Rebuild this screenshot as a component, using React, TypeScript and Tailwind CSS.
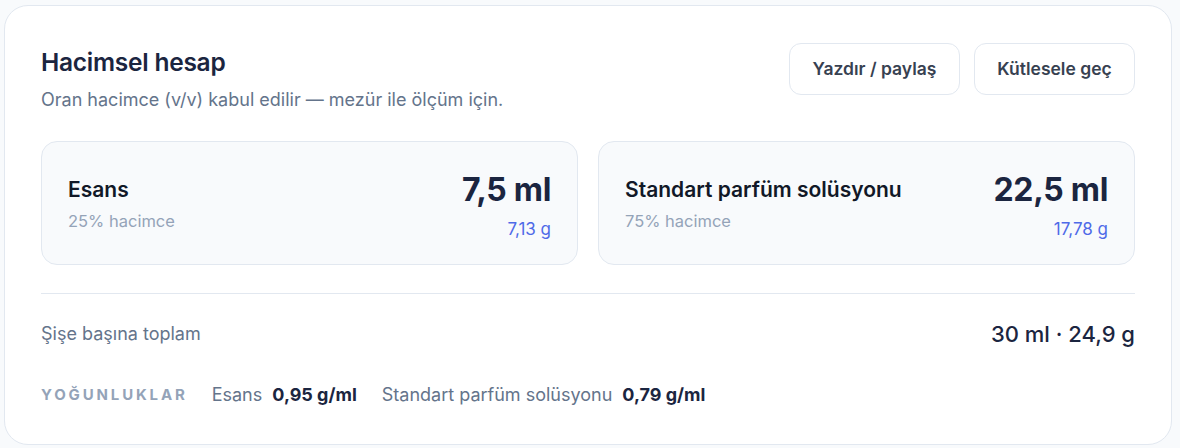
import React from "react";

const font = { fontFamily: "Inter, 'Noto Sans', sans-serif" };

function Part({ name, pct, ml, g }: { name: string; pct: string; ml: string; g: string }) {
  return (
    <div className="flex-1 rounded-[16px] border border-[#e2e8f0] bg-[#f8fafc] px-[26px] pt-[28px] pb-[24px]">
      <div className="flex items-center justify-between h-[40px]">
        <div className="text-[21px] leading-[28px] font-semibold text-[#111827]">{name}</div>
        <div className="text-[32px] leading-[40px] font-bold tracking-[-0.01em] text-[#1b2540]">{ml}</div>
      </div>
      <div className="flex items-start justify-between">
        <div className="text-[16.5px] leading-[22px] text-[#94a3b8]">{pct}</div>
        <div className="mt-[8px] text-[17px] leading-[22px] text-[#4f6ae8]">{g}</div>
      </div>
    </div>
  );
}

export default function App() {
  return (
    <div className="min-h-[448px] w-[1180px] bg-[#f8fafc] pt-[5px] pl-[4px]" style={font}>
      <div className="w-[1168px] h-[440px] rounded-[24px] border border-[#e2e8f0] bg-white px-[36px] pt-[37px] pb-[37px]">
        <div className="flex items-start justify-between">
          <div>
            <div className="pt-[3px] text-[24.5px] leading-[32px] font-semibold tracking-[-0.01em] text-[#1b2540]">Hacimsel hesap</div>
            <div className="mt-[10px] text-[18px] leading-[24px] text-[#64748b]">Oran hacimce (v/v) kabul edilir — mezür ile ölçüm için.</div>
          </div>
          <div className="flex gap-[14px]">
            <button className="h-[52px] w-[171px] rounded-[12px] border border-[#e2e8f0] bg-white text-[17.5px] font-semibold text-[#374151]">Yazdır / paylaş</button>
            <button className="h-[52px] w-[161px] rounded-[12px] border border-[#e2e8f0] bg-white text-[17.5px] font-semibold text-[#374151]">Kütlesele geç</button>
          </div>
        </div>

        <div className="mt-[29px] flex gap-[20px]">
          <Part name="Esans" pct="25% hacimce" ml="7,5 ml" g="7,13 g" />
          <Part name="Standart parfüm solüsyonu" pct="75% hacimce" ml="22,5 ml" g="17,78 g" />
        </div>

        <div className="mt-[28px] border-t border-[#e2e8f0] pt-[26px] flex items-center justify-between">
          <div className="text-[18px] leading-[28px] text-[#64748b]">Şişe başına toplam</div>
          <div className="text-[22px] leading-[28px] font-medium text-[#1b2540]">30 ml · 24,9 g</div>
        </div>

        <div className="mt-[36px] flex items-center text-[18px] leading-[22px]">
          <span className="text-[15px] font-bold tracking-[0.19em] text-[#94a3b8]">YOĞUNLUKLAR</span>
          <span className="ml-[24px] text-[#64748b]">Esans</span>
          <span className="ml-[10px] font-bold text-[#1b2540]">0,95 g/ml</span>
          <span className="ml-[25px] text-[#64748b]">Standart parfüm solüsyonu</span>
          <span className="ml-[10px] font-bold text-[#1b2540]">0,79 g/ml</span>
        </div>
      </div>
    </div>
  );
}
